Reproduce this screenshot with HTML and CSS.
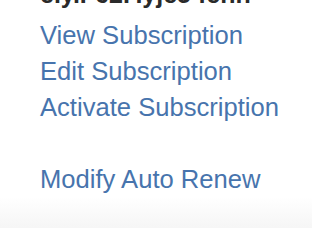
FILE: index.html
```html
<!doctype html>
<html lang="en">
<head>
  <meta charset="utf-8"/>
  <title>Subscription</title>
  <meta name="viewport" content="width=device-width, initial-scale=1"/>
  <link rel="stylesheet" href="styles.css">
</head>
<body>
  <main class="panel">
    <h2 class="sub-id">e.y.F62F.yjc5 fcnn</h2>

    <ul class="actions">
      <li><a href="#">View Subscription</a></li>
      <li><a href="#">Edit Subscription</a></li>
      <li><a href="#">Activate Subscription</a></li>
      <li class="spacer"></li>
      <li><a href="#">Modify Auto Renew</a></li>
    </ul>
  </main>
  <div class="fade"></div>
</body>
</html>
```

FILE: styles.css
```css
*{box-sizing:border-box;margin:0;padding:0}
html,body{height:100%;overflow:hidden;background:#fff}
body{font-family:"Liberation Sans",Arial,Helvetica,sans-serif;color:#222}

.panel{padding-left:40px}

.sub-id{
  font-size:25px;
  line-height:28px;
  font-weight:bold;
  color:#2a2a2a;
  margin:-20px 0 9px;
  white-space:nowrap;
}

.actions{list-style:none}
.actions li{font-size:25.6px;line-height:36px;height:36px}
.actions a{color:#4774ad;text-decoration:none}

.fade{
  height:40px;
  background:linear-gradient(#fff,#f3f3f3);
}
```
